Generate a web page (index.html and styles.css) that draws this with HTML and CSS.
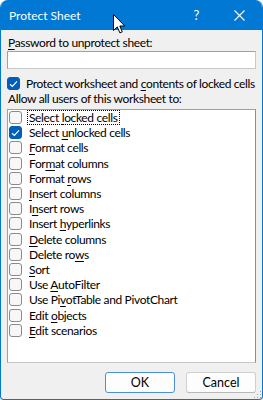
FILE: index.html
```
<!DOCTYPE html>
<html lang="en">
<head>
  <meta charset="UTF-8">
  <meta name="viewport" content="width=device-width, initial-scale=1">
  <title>Protect Sheet</title>
  <link rel="stylesheet" href="styles.css">
</head>
<body>

  <div class="window">
    <!-- Barra de título -->
    <div class="titlebar">
      <span class="title">Protect Sheet</span>
      <span class="help">?</span>
      <svg class="close" width="11" height="11" viewBox="0 0 11 11">
        <path d="M0.5 0.5 L10.5 10.5 M10.5 0.5 L0.5 10.5" stroke="#fff" stroke-width="1.1" fill="none"/>
      </svg>
    </div>

    <div class="content">
      <label class="label"><span class="key">P</span>assword to unprotect sheet:</label>
      <div class="input"></div>

      <div class="check-row main-check">
        <span class="box checked">
          <svg width="9" height="8" viewBox="0 0 9 8"><path d="M1 4.2 L3.4 6.4 L8 1.4" stroke="#fff" stroke-width="1.2" fill="none"/></svg>
        </span>
        <span>Protect worksheet and <span class="key">c</span>ontents of locked cells</span>
      </div>

      <div class="label allow">Allow all users of this worksheet to:</div>

      <div class="list">
        <div class="item"><span class="box"></span><span class="focus">Select <span class="key">l</span>ocked cells</span></div>
        <div class="item"><span class="box checked"><svg width="9" height="8" viewBox="0 0 9 8"><path d="M1 4.2 L3.4 6.4 L8 1.4" stroke="#fff" stroke-width="1.2" fill="none"/></svg></span><span>Select <span class="key">u</span>nlocked cells</span></div>
        <div class="item"><span class="box"></span><span><span class="key">F</span>ormat cells</span></div>
        <div class="item"><span class="box"></span><span>For<span class="key">m</span>at columns</span></div>
        <div class="item"><span class="box"></span><span>Format <span class="key">r</span>ows</span></div>
        <div class="item"><span class="box"></span><span><span class="key">I</span>nsert columns</span></div>
        <div class="item"><span class="box"></span><span>I<span class="key">n</span>sert rows</span></div>
        <div class="item"><span class="box"></span><span>Insert <span class="key">h</span>yperlinks</span></div>
        <div class="item"><span class="box"></span><span><span class="key">D</span>elete columns</span></div>
        <div class="item"><span class="box"></span><span>Delete ro<span class="key">w</span>s</span></div>
        <div class="item"><span class="box"></span><span><span class="key">S</span>ort</span></div>
        <div class="item"><span class="box"></span><span>Use <span class="key">A</span>utoFilter</span></div>
        <div class="item"><span class="box"></span><span>Use Pi<span class="key">v</span>otTable and PivotChart</span></div>
        <div class="item"><span class="box"></span><span>Edit <span class="key">o</span>bjects</span></div>
        <div class="item"><span class="box"></span><span><span class="key">E</span>dit scenarios</span></div>
      </div>

      <div class="buttons">
        <button class="btn default">OK</button>
        <button class="btn">Cancel</button>
      </div>
    </div>

    <!-- Agarre de redimensionado -->
    <svg class="grip" width="10" height="10" viewBox="0 0 10 10">
      <rect x="8" y="2" width="1" height="1" fill="#a0a0a0"/>
      <rect x="5" y="5" width="1" height="1" fill="#a0a0a0"/>
      <rect x="8" y="5" width="1" height="1" fill="#a0a0a0"/>
      <rect x="2" y="8" width="1" height="1" fill="#a0a0a0"/>
      <rect x="5" y="8" width="1" height="1" fill="#a0a0a0"/>
      <rect x="8" y="8" width="1" height="1" fill="#a0a0a0"/>
    </svg>

    <!-- Puntero del ratón -->
    <svg class="cursor" width="13" height="20" viewBox="0 0 13 20">
      <path d="M0.5 0.5 L0.5 16.5 L4.3 12.9 L6.9 18.9 L9.3 17.9 L6.8 12 L11.8 12 Z" fill="#fff" stroke="#000" stroke-width="1"/>
    </svg>
  </div>

</body>
</html>
```
FILE: styles.css
```
/* Variables de color */
:root {
  --title-blue: #0078d4;
  --face: #f0f0f0;
  --check-blue: #005fb8;
  --box-border: #8a8a8a;
}

body {
  margin: 0;
  padding: 0;
  background: #fff;
  font-family: "Segoe UI", Lato, sans-serif;
  font-size: 12px;
  letter-spacing: -0.35px;
  line-height: 15px;
  color: #000;
}

/* Ventana del diálogo */
.window {
  position: relative;
  width: 263px;
  height: 400px;
  box-sizing: border-box;
  border: 1px solid var(--title-blue);
  border-top: none;
  border-radius: 8px 8px 4px 4px;
  overflow: hidden;
  background: var(--face);
  display: flex;
  flex-direction: column;
}

.titlebar {
  height: 30px;
  background: var(--title-blue);
  color: #fff;
  display: flex;
  align-items: center;
  padding-left: 8px;
  flex-shrink: 0;
}

.title {
  flex: 1;
  letter-spacing: 0;
}

.help {
  font-size: 13px;
  margin-right: 35px;
}

.close {
  margin-right: 17px;
}

.content {
  display: flex;
  flex-direction: column;
  padding: 0 6px;
  flex: 1;
}

.label {
  display: block;
  padding-left: 1px;
  margin-top: 5px;
  white-space: nowrap;
}

.key {
  text-decoration: underline;
  text-underline-offset: 2px;
}

.input {
  margin-top: 1px;
  height: 18px;
  box-sizing: border-box;
  background: #fff;
  border: 1px solid #7a7a7a;
  border-color: #a0a0a0 #c8c8c8 #c8c8c8 #a0a0a0;
}

.check-row {
  display: flex;
  align-items: center;
  gap: 6px;
  white-space: nowrap;
}

.main-check {
  margin-top: 7px;
}

.allow {
  margin-top: 0;
}

/* Casillas de verificación */
.box {
  width: 13px;
  height: 13px;
  box-sizing: border-box;
  border: 1px solid var(--box-border);
  border-radius: 3px;
  background: #f7f7f7;
  display: flex;
  align-items: center;
  justify-content: center;
  flex-shrink: 0;
}

.box.checked {
  background: var(--check-blue);
  border-color: var(--check-blue);
}

/* Lista de permisos */
.list {
  margin-top: 3px;
  height: 254px;
  box-sizing: border-box;
  background: #fff;
  border: 1px solid #a0a0a0;
  border-color: #a0a0a0 #8c8c8c #c8c8c8 #a0a0a0;
}

.item {
  display: flex;
  align-items: center;
  gap: 7px;
  height: 15.2px;
  padding-left: 1px;
  white-space: nowrap;
}

.focus {
  outline: 1px dotted #000;
  outline-offset: 0;
  padding: 0 1px;
  margin-left: -1px;
  line-height: 13px;
}

/* Botones */
.buttons {
  display: flex;
  justify-content: flex-end;
  gap: 11px;
  margin-top: 9px;
}

.btn {
  width: 70px;
  height: 21px;
  font-family: inherit;
  font-size: 12.5px;
  letter-spacing: 0;
  color: #000;
  background: #fdfdfd;
  border: 1px solid #d0d0d0;
  border-bottom-color: #b8b8b8;
  border-radius: 3px;
  padding: 0;
}

.btn.default {
  border: 1.5px solid #4a90d9;
}

.grip {
  position: absolute;
  right: 0;
  bottom: 0;
}

.cursor {
  position: absolute;
  left: 112px;
  top: 14px;
}
```
